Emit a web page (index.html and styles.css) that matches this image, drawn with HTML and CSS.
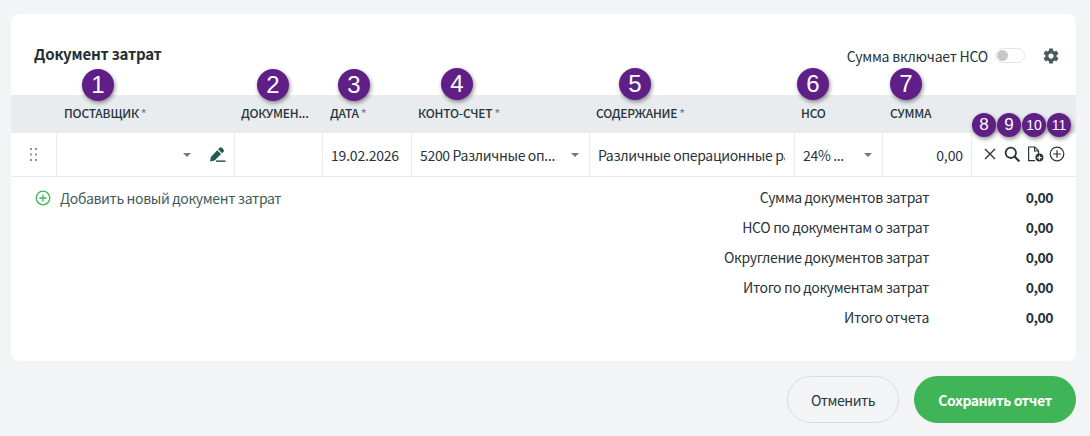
FILE: index.html
```html
<!DOCTYPE html>
<html lang="ru">
<head>
    <meta charset="UTF-8">
    <title>Документ затрат</title>
    <link rel="stylesheet" href="styles.css">
</head>
<body>
    <div class="card">
        <div class="card-head">
            <h2>Документ затрат</h2>
            <div class="head-right">
                <span>Сумма включает НСО</span>
                <span class="toggle"><span class="knob"></span></span>
                <svg class="gear" viewBox="0 0 24 24" width="18" height="18"><path fill="#4d5a60" d="M19.43 12.98c.04-.32.07-.64.07-.98s-.03-.66-.07-.98l2.11-1.65c.19-.15.24-.42.12-.64l-2-3.46c-.12-.22-.39-.3-.61-.22l-2.49 1c-.52-.4-1.08-.73-1.69-.98l-.38-2.65C14.46 2.18 14.25 2 14 2h-4c-.25 0-.46.18-.49.42l-.38 2.65c-.61.25-1.17.59-1.69.98l-2.49-1c-.23-.09-.49 0-.61.22l-2 3.46c-.13.22-.07.49.12.64l2.11 1.65c-.04.32-.07.65-.07.98s.03.66.07.98l-2.11 1.65c-.19.15-.24.42-.12.64l2 3.46c.12.22.39.3.61.22l2.49-1c.52.4 1.08.73 1.69.98l.38 2.65c.03.24.24.42.49.42h4c.25 0 .46-.18.49-.42l.38-2.65c.61-.25 1.17-.59 1.69-.98l2.49 1c.23.09.49 0 .61-.22l2-3.46c.12-.22.07-.49-.12-.64l-2.11-1.65zM12 15.5c-1.93 0-3.5-1.57-3.5-3.5s1.57-3.5 3.5-3.5 3.5 1.57 3.5 3.5-1.57 3.5-3.5 3.5z"/></svg>
            </div>
        </div>

        <div class="table">
            <div class="th"></div>
            <div class="th">Поставщик<i>*</i></div>
            <div class="th">Докумен...</div>
            <div class="th">Дата<i>*</i></div>
            <div class="th">Конто-счет<i>*</i></div>
            <div class="th">Содержание<i>*</i></div>
            <div class="th">НСО</div>
            <div class="th">Сумма</div>
            <div class="th"></div>

            <div class="td drag">
                <svg viewBox="0 0 7 13" width="7" height="13"><path fill="#8a9498" d="M0 0h2v2H0zM5 0h2v2H5zM0 5.5h2v2H0zM5 5.5h2v2H5zM0 11h2v2H0zM5 11h2v2H5z"/></svg>
            </div>
            <div class="td supplier">
                <span class="caret"></span>
                <svg class="pencil" viewBox="0 0 20 20" width="20" height="20"><path fill="#235a57" d="M12.6 2.8a1.6 1.6 0 0 1 2.3 0l1.6 1.6a1.6 1.6 0 0 1 0 2.3l-1.5 1.5-3.9-3.9zM10.2 5.2l3.9 3.9-6.5 6.5-4.6.9.9-4.6z"/><rect x="9" y="15.4" width="9.5" height="1.5" fill="#235a57"/></svg>
            </div>
            <div class="td"></div>
            <div class="td date">19.02.2026</div>
            <div class="td select"><span>5200 Различные оп...</span><span class="caret"></span></div>
            <div class="td"><span class="cut">Различные операционные расходы</span></div>
            <div class="td select"><span>24% ...</span><span class="caret"></span></div>
            <div class="td amount">0,00</div>
            <div class="td actions">
                <svg viewBox="0 0 16 16" width="16" height="16"><path stroke="#2b3538" stroke-width="1.4" fill="none" d="M3 3l10 10M13 3L3 13"/></svg>
                <svg viewBox="0 0 16 16" width="16" height="16"><circle cx="6.8" cy="6.8" r="5.2" stroke="#2b3538" stroke-width="1.8" fill="none"/><path stroke="#2b3538" stroke-width="2.2" d="M10.4 10.4l5 5"/></svg>
                <svg class="doc" viewBox="0 0 17 16" width="17" height="16"><path stroke="#2b3538" stroke-width="1.2" fill="none" d="M8 14.6H1.6V1h6.2l3.7 3.7v3.2M7.6 1v4h3.9"/><circle cx="12.4" cy="11.6" r="4" fill="#2b3538"/><path stroke="#fff" stroke-width="1.2" d="M10.2 11.6h4.4M12.4 9.4v4.4"/></svg>
                <svg viewBox="0 0 16 16" width="16" height="16"><circle cx="8" cy="8" r="6.8" stroke="#2b3538" stroke-width="1.2" fill="none"/><path stroke="#2b3538" stroke-width="1.2" d="M4.2 8h7.6M8 4.2v7.6"/></svg>
            </div>

            <span class="badge b1">1</span>
            <span class="badge b2">2</span>
            <span class="badge b3">3</span>
            <span class="badge b4">4</span>
            <span class="badge b5">5</span>
            <span class="badge b6">6</span>
            <span class="badge b7">7</span>
            <span class="badge small b8">8</span>
            <span class="badge small b9">9</span>
            <span class="badge small two b10">10</span>
            <span class="badge small two b11">11</span>
        </div>

        <div class="card-foot">
            <a href="#" class="add-link">
                <svg viewBox="0 0 16 16" width="16" height="16"><circle cx="8" cy="8" r="6.8" stroke="#3fb557" stroke-width="1.3" fill="none"/><path stroke="#3fb557" stroke-width="1.3" d="M4.4 8h7.2M8 4.4v7.2"/></svg>
                Добавить новый документ затрат
            </a>
            <div class="totals">
                <span>Сумма документов затрат</span><b>0,00</b>
                <span>НСО по документам о затрат</span><b>0,00</b>
                <span>Округление документов затрат</span><b>0,00</b>
                <span>Итого по документам затрат</span><b>0,00</b>
                <span>Итого отчета</span><b>0,00</b>
            </div>
        </div>
    </div>

    <div class="buttons">
        <button class="btn cancel">Отменить</button>
        <button class="btn save">Сохранить отчет</button>
    </div>
</body>
</html>
```

FILE: styles.css
```css
* {
    box-sizing: border-box;
}
body {
    margin: 0;
    height: 436px;
    padding: 14px 14px 0 11px;
    background-color: #f3f4f6;
    font-family: "Noto Sans CJK SC", "Noto Sans", sans-serif;
    font-size: 14px;
    letter-spacing: -0.33px;
    color: #27343a;
    overflow: hidden;
}
.card {
    height: 347px;
    background-color: #fff;
    border-radius: 8px;
}
.card-head {
    height: 81px;
    padding: 28px 16px 0 23px;
    display: flex;
    justify-content: space-between;
    align-items: flex-start;
}
h2 {
    margin: 0;
    font-size: 15px;
    line-height: 24px;
    font-weight: 700;
    letter-spacing: -0.2px;
    color: #232f34;
}
.head-right {
    display: flex;
    align-items: center;
    height: 27px;
    letter-spacing: -0.22px;
}
.toggle {
    width: 30px;
    height: 15px;
    margin-left: 7px;
    margin-right: 17px;
    border: 1px solid #e2e5e7;
    border-radius: 8px;
    padding: 1px;
}
.knob {
    display: block;
    width: 11px;
    height: 11px;
    border-radius: 50%;
    background-color: #c4c8ca;
}
.table {
    position: relative;
    display: grid;
    grid-template-columns: 45px 178px 88px 89px 178px 205px 88px 89px 105px;
    grid-template-rows: 38px 44px;
}
.th {
    background-color: #e9ecee;
    font-size: 12px;
    font-weight: 500;
    letter-spacing: -0.2px;
    text-transform: uppercase;
    line-height: 35px;
    padding-left: 7px;
    white-space: nowrap;
    color: #27343a;
}
.th i {
    font-style: normal;
    color: #7b858a;
    margin-left: 2px;
}
.th:nth-child(2) {
    padding-left: 8px;
}
.th:nth-child(4), .th:nth-child(8) {
    padding-left: 8px;
}
.td {
    border-bottom: 1px solid #e9ecee;
    border-left: 1px solid #e9ecee;
    display: flex;
    align-items: center;
    padding: 0 9px 0 8px;
    white-space: nowrap;
    overflow: hidden;
}
.drag {
    border-left: none;
    justify-content: center;
}
.supplier {
    justify-content: flex-end;
    padding-right: 7px;
}
.pencil {
    margin-left: 16px;
}
.caret {
    flex: none;
    width: 0;
    height: 0;
    border-left: 4px solid transparent;
    border-right: 4px solid transparent;
    border-top: 4px solid #6f7a7f;
}
.select {
    justify-content: space-between;
    gap: 9px;
    padding-right: 10px;
}
.cut {
    overflow: hidden;
}
.date {
    letter-spacing: -0.2px;
}
.amount {
    justify-content: flex-end;
    padding-right: 8px;
    letter-spacing: -0.1px;
}
.actions {
    gap: 6px;
    padding: 0 0 2px 10px;
}
.doc {
    margin-left: 1px;
    margin-right: -1px;
}
.badge {
    position: absolute;
    top: -26px;
    width: 32px;
    height: 32px;
    border-radius: 50%;
    background-color: #5f1f87;
    color: #fff;
    font-family: "Liberation Sans", Arial, sans-serif;
    font-size: 24px;
    letter-spacing: 0;
    line-height: 32px;
    text-align: center;
    box-shadow: 1px 2px 4px rgba(0, 0, 0, 0.45);
}
.badge.small {
    top: 18px;
    width: 24px;
    height: 24px;
    font-size: 17px;
    line-height: 24px;
}
.badge.two {
    font-size: 14px;
}
.b1 { left: 71px; }
.b2 { left: 246px; }
.b3 { left: 327px; }
.b4 { left: 430px; top: -27px; }
.b5 { left: 608px; top: -27px; }
.b6 { left: 786px; top: -27px; }
.b7 { left: 879px; top: -27px; }
.b8 { left: 961px; }
.b9 { left: 986px; }
.b10 { left: 1011px; }
.b11 { left: 1036px; }
.card-foot {
    display: flex;
    justify-content: space-between;
    padding: 6px 23px 0 24px;
}
.add-link {
    display: flex;
    align-items: center;
    gap: 9px;
    height: 30px;
    color: #3d5c5c;
    text-decoration: none;
}
.totals {
    display: grid;
    grid-template-columns: auto 124px;
    grid-auto-rows: 30px;
    line-height: 29px;
    text-align: right;
}
.totals b {
    font-weight: 700;
    letter-spacing: -0.5px;
}
.buttons {
    display: flex;
    justify-content: flex-end;
    gap: 15px;
    margin-top: 15px;
}
.btn {
    height: 47px;
    border-radius: 24px;
    font-family: inherit;
    font-size: 14px;
    letter-spacing: -0.45px;
    cursor: pointer;
}
.cancel {
    width: 112px;
    border: 1px solid #d9dcde;
    background-color: transparent;
    color: #27343a;
}
.save {
    width: 162px;
    border: none;
    background-color: #3fb557;
    color: #fff;
    font-weight: 700;
}
```
